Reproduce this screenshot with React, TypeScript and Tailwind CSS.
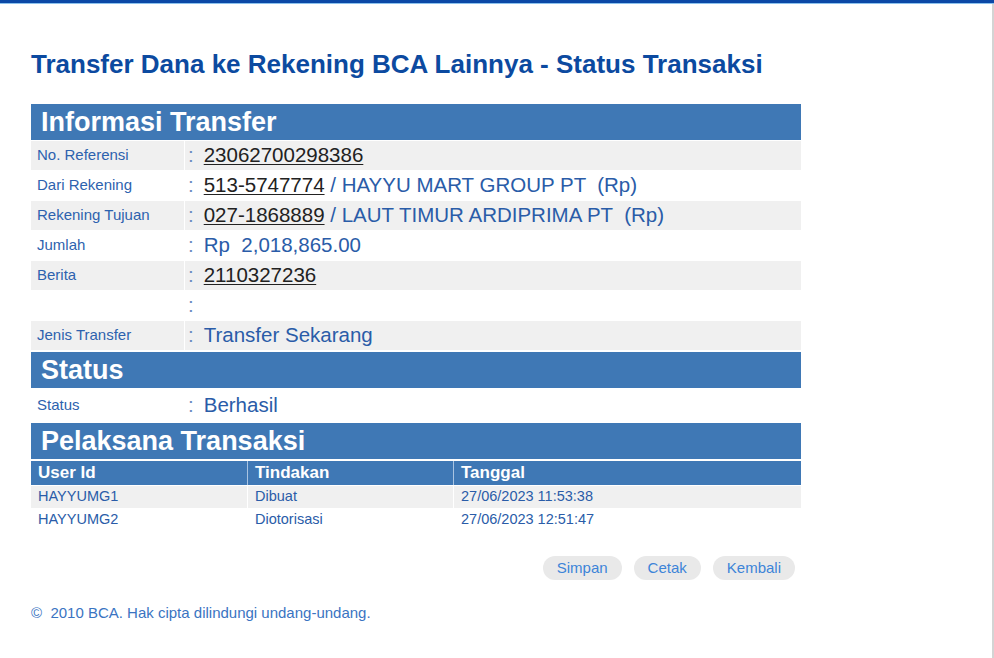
const rows: { label: string; value?: string; link?: string; suffix?: string; shade: boolean }[] = [
  { label: "No. Referensi", link: "23062700298386", shade: true },
  { label: "Dari Rekening", link: "513-5747774", suffix: " / HAYYU MART GROUP PT  (Rp)", shade: false },
  { label: "Rekening Tujuan", link: "027-1868889", suffix: " / LAUT TIMUR ARDIPRIMA PT  (Rp)", shade: true },
  { label: "Jumlah", value: "Rp  2,018,865.00", shade: false },
  { label: "Berita", link: "2110327236", shade: true },
  { label: "", value: "", shade: false },
  { label: "Jenis Transfer", value: "Transfer Sekarang", shade: true },
]

const pelaksana = [
  { user: "HAYYUMG1", aksi: "Dibuat", tanggal: "27/06/2023 11:53:38", shade: true },
  { user: "HAYYUMG2", aksi: "Diotorisasi", tanggal: "27/06/2023 12:51:47", shade: false },
]

function SectionHeader({ title }: { title: string }) {
  return (
    <div className="flex h-[36px] items-center bg-[#3f78b5] pl-[10px] text-[27px] font-bold leading-none text-white">
      {title}
    </div>
  )
}

function InfoRow({
  label,
  children,
  shade,
}: {
  label: string
  children: React.ReactNode
  shade: boolean
}) {
  const bg = shade ? "bg-[#f0f0f0]" : "bg-white"
  return (
    <div className="flex h-[29px] gap-px">
      <div className={`flex w-[153px] items-center pl-[6px] text-[15px] text-[#2d62ae] ${bg}`}>
        {label}
      </div>
      <div className={`flex flex-1 items-center whitespace-pre text-[20.5px] text-[#2a5ca8] ${bg}`}>
        <span className="ml-[3px] mr-[10px] text-[#6b8cbf]">:</span>
        {children}
      </div>
    </div>
  )
}

function Pill({ label }: { label: string }) {
  return (
    <button className="flex h-[24px] items-center rounded-full bg-[#e9e9e9] px-[14px] text-[15px] text-[#3d84d8]">
      {label}
    </button>
  )
}

export default function App() {
  return (
    <div className="flex min-h-[658px] w-[994px] flex-col bg-white font-['Liberation_Sans',Arial,sans-serif]">
      <div className="h-[3px] bg-[#0b48a6]" />
      <div className="h-px bg-[#8cc2ee]" />
      <div className="flex flex-1">
        <div className="flex-1 pl-[31px]">
          <h1 className="mt-[45px] text-[26px] font-bold leading-[30px] text-[#0c4aa0]">
            Transfer Dana ke Rekening BCA Lainnya - Status Transaksi
          </h1>

          <div className="mt-[25px] flex w-[770px] flex-col gap-px">
            <SectionHeader title="Informasi Transfer" />
            {rows.map((r, i) => (
              <InfoRow key={i} label={r.label} shade={r.shade}>
                {r.link && <span className="text-[#222] underline decoration-1 underline-offset-2">{r.link}</span>}
                {r.suffix && <span>{r.suffix}</span>}
                {r.value && <span>{r.value}</span>}
              </InfoRow>
            ))}

            <div className="mt-px">
              <SectionHeader title="Status" />
            </div>
            <div className="flex h-[32px] gap-px">
              <div className="flex w-[153px] items-center pl-[6px] text-[15px] text-[#2d62ae]">Status</div>
              <div className="flex flex-1 items-center text-[20.5px] text-[#2a5ca8]">
                <span className="ml-[3px] mr-[10px] text-[#6b8cbf]">:</span>
                Berhasil
              </div>
            </div>

            <div className="mt-px">
              <SectionHeader title="Pelaksana Transaksi" />
            </div>
            <div className="mt-px flex h-[24px] gap-px bg-[#a9c4e2] text-[17px] font-bold text-white">
              <div className="flex w-[216px] items-center bg-[#3f78b5] pl-[7px]">User Id</div>
              <div className="flex w-[205px] items-center bg-[#3f78b5] pl-[7px]">Tindakan</div>
              <div className="flex flex-1 items-center bg-[#3f78b5] pl-[7px]">Tanggal</div>
            </div>
            {pelaksana.map((p) => {
              const bg = p.shade ? "bg-[#f0f0f0]" : "bg-white"
              return (
                <div key={p.user} className="flex h-[22px] gap-px text-[14.5px] text-[#2a5ca8]">
                  <div className={`flex w-[216px] items-center pl-[7px] ${bg}`}>{p.user}</div>
                  <div className={`flex w-[205px] items-center pl-[7px] ${bg}`}>{p.aksi}</div>
                  <div className={`flex flex-1 items-center pl-[7px] ${bg}`}>{p.tanggal}</div>
                </div>
              )
            })}
          </div>

          <div className="mt-[25px] flex w-[764px] justify-end gap-[12px]">
            <Pill label="Simpan" />
            <Pill label="Cetak" />
            <Pill label="Kembali" />
          </div>

          <p className="mt-[22px] text-[15px] text-[#3a74c2]">© &nbsp;2010 BCA. Hak cipta dilindungi undang-undang.</p>
        </div>
        <div className="w-[2px] bg-[#d4d4d4]" />
      </div>
    </div>
  )
}
